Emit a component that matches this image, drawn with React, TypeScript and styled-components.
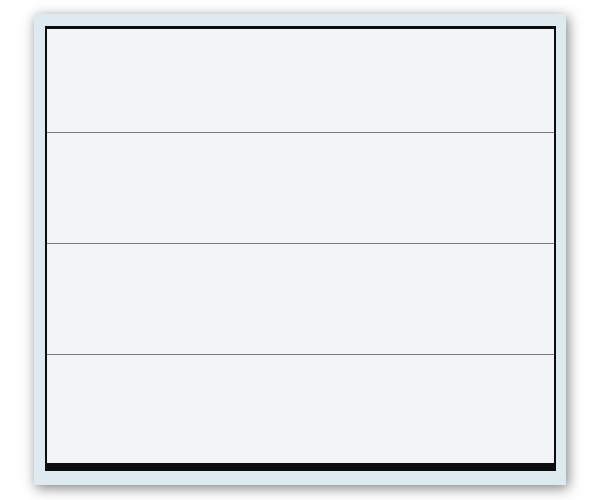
import React from "react";
import styled, { createGlobalStyle } from "styled-components";

const Global = createGlobalStyle({
	'html, body': {
		margin: 0,
		padding: 0,
		background: '#ffffff',
		fontFamily: '"Liberation Sans", Arial, sans-serif'
	}
});

const Page = styled.div({
	width: 600,
	height: 500,
	paddingTop: 14,
	paddingLeft: 34,
	boxSizing: 'border-box'
});

const Frame = styled.div({
	width: 532,
	height: 471,
	boxSizing: 'border-box',
	padding: '12px 10px 14px 11px',
	background: '#dfeaf0',
	boxShadow: '2px 3px 12px rgba(0, 0, 0, 0.5)',
	display: 'flex'
});

const Door = styled.div({
	flex: 1,
	display: 'flex',
	flexDirection: 'column',
	borderStyle: 'solid',
	borderColor: '#0b0d0f',
	borderWidth: '3px 2px 8px 2px',
	background: '#f2f4f8'
});

const Panel = styled.div<{ $h: number }>(({ $h }) => ({
	height: $h,
	flexShrink: 0,
	background: '#f2f4f8',
	'& + &': {
		borderTop: '1px solid #6d7b7d'
	}
}));

const rows = [103, 110, 110, 108];

export default function App() {
	return <>
		<Global />
		<Page>
			<Frame>
				<Door>
					{rows.map((h, i) => <Panel key={i} $h={h} />)}
				</Door>
			</Frame>
		</Page>
	</>
}
